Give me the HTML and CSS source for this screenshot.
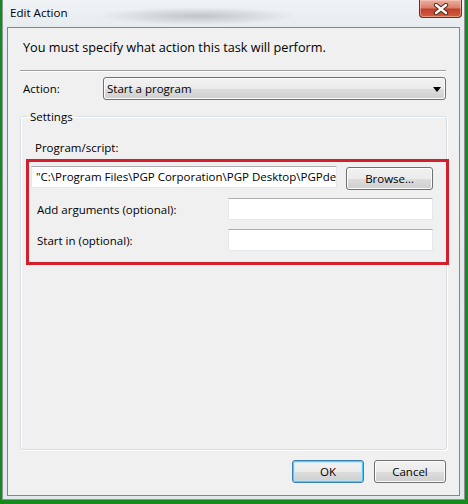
FILE: index.html
```html
<!DOCTYPE html>
<html>
<head>
<meta charset="utf-8">
<link rel="stylesheet" href="styles.css">
</head>
<body>
<div class="outer">
  <div class="frame">
    <div class="titlebar">
      <span class="title">Edit Action</span>
      <div class="close">
        <svg width="18" height="12" viewBox="0 0 18 12"><path d="M4 2 L14 10 M14 2 L4 10" stroke="#5a2418" stroke-width="4.4" stroke-linecap="round"/><path d="M4 2 L14 10 M14 2 L4 10" stroke="#ffffff" stroke-width="2.4" stroke-linecap="round"/></svg>
      </div>
    </div>
    <div class="client">
      <p class="intro">You must specify what action this task will perform.</p>
      <div class="sep"></div>
      <div class="action-row">
        <span class="lbl">Action:</span>
        <div class="combo">
          <span>Start a program</span>
          <svg class="arrow" width="8" height="5" viewBox="0 0 8 5"><path d="M0 0 H8 L4 5 Z" fill="#000"/></svg>
        </div>
      </div>
      <fieldset class="group">
        <legend>Settings</legend>
        <div class="prog-lbl">Program/script:</div>
        <div class="redbox">
          <div class="row1">
            <div class="tb path">"C:\Program Files\PGP Corporation\PGP Desktop\PGPde</div>
            <div class="btn browse">Browse...</div>
          </div>
          <div class="row">
            <span class="lbl">Add arguments (optional):</span>
            <div class="tb field"></div>
          </div>
          <div class="row">
            <span class="lbl">Start in (optional):</span>
            <div class="tb field"></div>
          </div>
        </div>
      </fieldset>
      <div class="buttons">
        <div class="btn ok">OK</div>
        <div class="btn cancel">Cancel</div>
      </div>
    </div>
  </div>
</div>
</body>
</html>
```
FILE: styles.css
```css
* { box-sizing: border-box; }
html, body { margin: 0; padding: 0; }
body {
  width: 468px;
  height: 504px;
  overflow: hidden;
  font-family: "Open Sans", "Noto Sans", sans-serif;
  font-size: 11.5px;
  color: #000;
}
.outer {
  width: 468px;
  height: 504px;
  background: #168a1c;
  padding: 0 3px 4px 2px;
}
.frame {
  height: 100%;
  background:
    radial-gradient(ellipse 100px 9px at 195px 16px, rgba(140,146,152,0.45), rgba(140,146,152,0) 100%),
    linear-gradient(180deg, #f0f3f6 0px, #e6ebef 30px, #e2e8ec 100%);
  border: 1px solid #8d9499;
  border-top: none;
  padding: 0 4px 3px 4px;
  display: flex;
  flex-direction: column;
}
.titlebar {
  height: 27px;
  display: flex;
  justify-content: space-between;
  align-items: flex-start;
  padding-left: 3px;
}
.title {
  margin-top: 5px;
  line-height: 16px;
  font-size: 11.6px;
  color: #000;
}
.close {
  width: 43px;
  height: 18px;
  margin-right: -2px;
  border: 1px solid #6a2c22;
  border-top: none;
  border-radius: 0 0 4px 4px;
  background: linear-gradient(180deg, #eab1a2 0%, #d9806b 45%, #c2402a 55%, #d2603f 100%);
  box-shadow: inset 0 0 0 1px rgba(255,210,200,0.5);
  display: flex;
  align-items: center;
  justify-content: center;
}
.client {
  flex: 1;
  background: #f0f0f0;
  border: 1px solid #7f8890;
  display: flex;
  flex-direction: column;
  padding: 0 12px 12px 12px;
}
.intro {
  margin: 12px 0 0 3px;
  line-height: 15px;
  font-size: 12.7px;
}
.sep {
  margin-top: 15px;
  height: 2px;
  border-top: 1px solid #a0a0a0;
  border-bottom: 1px solid #ffffff;
  margin-right: 1px;
}
.action-row {
  margin-top: 5px;
  display: flex;
  align-items: center;
}
.action-row .lbl {
  margin-left: 3px;
  width: 80px;
}
.combo {
  flex: 1;
  height: 23px;
  margin-right: 1px;
  border: 1px solid #707070;
  border-radius: 3px;
  background: linear-gradient(180deg, #f2f2f2 0%, #ebebeb 50%, #dddddd 51%, #cfcfcf 100%);
  box-shadow: inset 0 0 0 1px #fcfcfc;
  display: flex;
  align-items: center;
  justify-content: space-between;
  padding: 0 4px 0 3px;
}
.arrow { margin-top: 1px; }
.group {
  flex: 1;
  margin: 9px 0 0 0;
  padding: 0;
  border: 1px solid #d5dfe5;
  box-shadow: inset 1px 1px 0 #ffffff, 1px 1px 0 #ffffff;
  border-radius: 3px;
  min-width: 0;
}
.group legend {
  margin-left: 6px;
  padding: 0 3px;
  line-height: 15px;
}
.prog-lbl {
  margin: 16px 0 0 14px;
  line-height: 15px;
}
.redbox {
  margin: 4px -3px 0 5px;
  border: 3px solid #d21f2c;
  padding: 4px 13px 11px 2px;
}
.row1 {
  display: flex;
  align-items: flex-start;
  gap: 9px;
}
.tb {
  background: #fff;
  border: 1px solid #e3e9ef;
  border-top-color: #abadb3;
  height: 22px;
}
.path {
  width: 307px;
  white-space: nowrap;
  overflow: hidden;
  padding: 0 0 0 4px;
  line-height: 20px;
}
.btn {
  height: 23px;
  border: 1px solid #707070;
  border-radius: 3px;
  background: linear-gradient(180deg, #f2f2f2 0%, #ebebeb 50%, #dddddd 51%, #cfcfcf 100%);
  box-shadow: inset 0 0 0 1px #fcfcfc;
  display: flex;
  align-items: center;
  justify-content: center;
}
.browse {
  width: 87px;
  margin-top: 1px;
}
.row {
  margin-top: 8px;
  display: flex;
  align-items: center;
  justify-content: space-between;
}
.row + .row { margin-top: 9px; }
.row .lbl { margin-left: 6px; }
.field { width: 205px; }
.buttons {
  margin-top: 10px;
  display: flex;
  justify-content: flex-end;
  gap: 10px;
  margin-right: 1px;
}
.ok, .cancel { width: 72px; height: 23px; }
.ok {
  border-color: #3c7fb1;
  box-shadow: inset 0 0 0 1px #48d0f8, inset 0 0 0 2px rgba(170,230,250,0.6);
}
```
